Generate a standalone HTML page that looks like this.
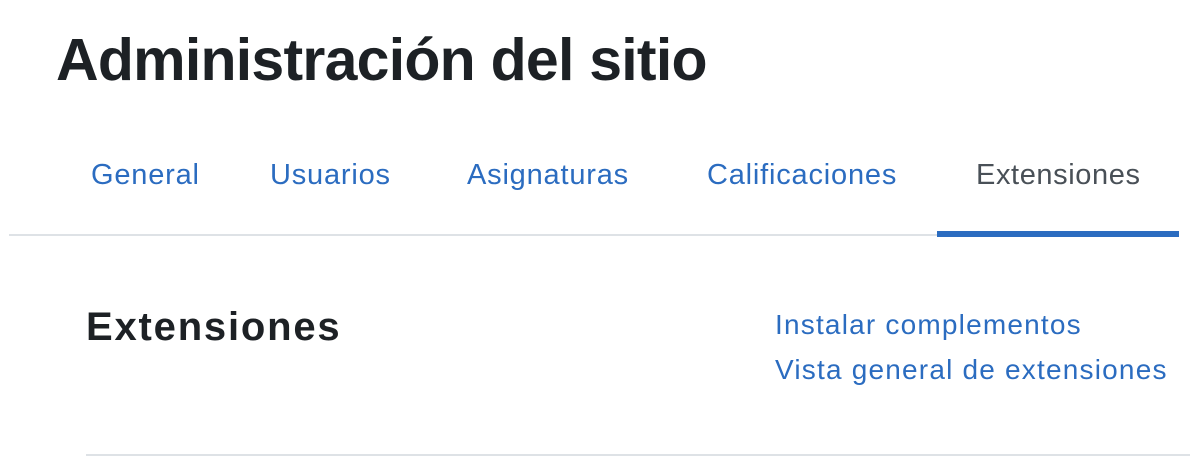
<!DOCTYPE html>
<html><head><meta charset="utf-8"><style>
body{margin:0;width:1190px;height:475px;background:#fff;font-family:"Liberation Sans",sans-serif;position:relative;overflow:hidden}
.a{position:absolute;white-space:nowrap}
h1{position:absolute;left:56px;top:26px;margin:0;font-size:59px;font-weight:bold;color:#1d2125;letter-spacing:-0.75px}
.t{font-size:29px;color:#2b6cc0;top:159px;letter-spacing:0.8px}
.l{font-size:28px;color:#2b6cc0;letter-spacing:1.2px;left:775px}
</style></head><body>
<h1>Administración del sitio</h1>
<div class="a t" style="left:91px">General</div>
<div class="a t" style="left:270px">Usuarios</div>
<div class="a t" style="left:467px">Asignaturas</div>
<div class="a t" style="left:707px">Calificaciones</div>
<div class="a t" style="left:976px;color:#495057;letter-spacing:0.6px">Extensiones</div>
<div class="a" style="left:9px;top:234px;width:1170px;height:2px;background:#dee2e6"></div>
<div class="a" style="left:937px;top:231px;width:242px;height:6px;background:#2b6cc0"></div>
<div class="a" style="left:86px;top:305px;font-size:40px;font-weight:bold;color:#1d2125;letter-spacing:1.8px">Extensiones</div>
<div class="a l" style="top:309px">Instalar complementos</div>
<div class="a l" style="top:354px">Vista general de extensiones</div>
<div class="a" style="left:86px;top:454px;width:1104px;height:2px;background:#dee2e6"></div>
</body></html>
